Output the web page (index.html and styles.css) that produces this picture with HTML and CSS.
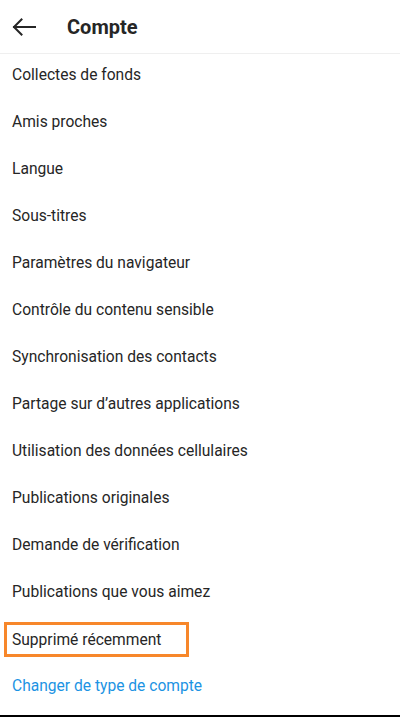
FILE: index.html
```html
<!DOCTYPE html>
<html lang="fr">
<head>
<meta charset="utf-8">
<link rel="stylesheet" href="styles.css">
</head>
<body>
<div class="screen">
  <header class="topbar">
    <svg class="back" width="24" height="18" viewBox="0 0 24 18" aria-hidden="true">
      <path d="M23 9H2M9.5 1.5L2 9l7.5 7.5" fill="none" stroke="#262626" stroke-width="2" stroke-linecap="square"/>
    </svg>
    <h1 class="title">Compte</h1>
  </header>
  <ul class="menu">
    <li class="item">Collectes de fonds</li>
    <li class="item">Amis proches</li>
    <li class="item">Langue</li>
    <li class="item">Sous-titres</li>
    <li class="item">Paramètres du navigateur</li>
    <li class="item">Contrôle du contenu sensible</li>
    <li class="item">Synchronisation des contacts</li>
    <li class="item">Partage sur d’autres applications</li>
    <li class="item">Utilisation des données cellulaires</li>
    <li class="item">Publications originales</li>
    <li class="item">Demande de vérification</li>
    <li class="item">Publications que vous aimez</li>
    <li class="item highlighted"><span class="hl-box">Supprimé récemment</span></li>
    <li class="item link">Changer de type de compte</li>
  </ul>
  <div class="bottom-line"></div>
</div>
</body>
</html>
```

FILE: styles.css
```css
* { box-sizing: border-box; }
html, body { margin: 0; padding: 0; background: #fff; }
body {
  font-family: Roboto, "Liberation Sans", Arial, sans-serif;
  color: #262626;
  width: 400px;
  height: 717px;
  overflow: hidden;
}
.screen {
  display: flex;
  flex-direction: column;
  height: 717px;
}
.topbar {
  height: 54px;
  display: flex;
  align-items: center;
  border-bottom: 1px solid #efefef;
  padding-left: 12px;
  flex-shrink: 0;
}
.back { display: block; }
.title {
  margin: 0 0 0 31px;
  font-size: 20px;
  font-weight: 700;
  color: #262626;
  line-height: 1;
}
.menu {
  list-style: none;
  margin: 0;
  padding: 0;
  flex: 1;
}
.item {
  height: 47px;
  padding: 12px 0 0 12px;
  font-size: 15.6px;
  line-height: 18px;
}
.highlighted { padding: 4px 0 0 4px; }
.hl-box {
  display: flex;
  align-items: center;
  width: 185px;
  height: 35px;
  border: 3px solid #f7872a;
  padding-left: 5px;
}
.link { color: #1c93e3; }
.bottom-line {
  height: 2px;
  background: #000;
  flex-shrink: 0;
}
```
